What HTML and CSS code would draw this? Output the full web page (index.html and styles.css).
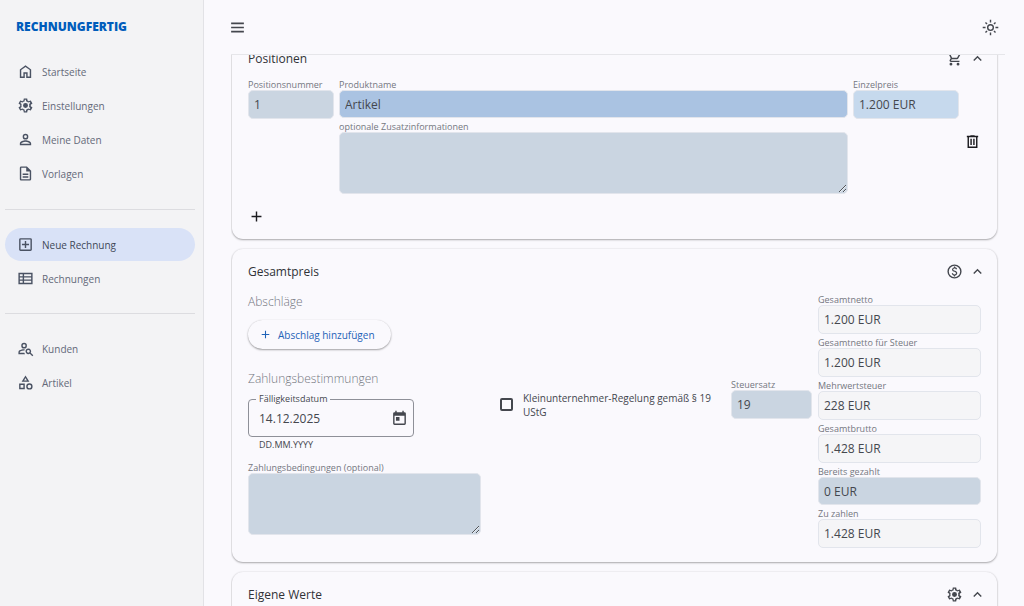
FILE: index.html
```html
<!DOCTYPE html>
<html lang="de">
<head>
  <meta charset="UTF-8">
  <meta name="viewport" content="width=device-width, initial-scale=1">
  <title>Rechnungfertig</title>
  <link rel="stylesheet" href="styles.css">
</head>
<body>

  <!-- Icon sprite -->
  <svg class="sprite" aria-hidden="true">
    <symbol id="i-home" viewBox="0 0 24 24"><path d="M6 19h3v-6h6v6h3v-9l-6-4.5L6 10v9zm-2 2V9l8-6 8 6v12h-7v-6h-2v6H4z"/></symbol>
    <symbol id="i-gear" viewBox="0 0 24 24"><path d="M19.43 12.98c.04-.32.07-.64.07-.98s-.03-.66-.07-.98l2.11-1.65c.19-.15.24-.42.12-.64l-2-3.46c-.12-.22-.39-.3-.61-.22l-2.49 1c-.52-.4-1.08-.73-1.69-.98l-.38-2.65C14.46 2.18 14.25 2 14 2h-4c-.25 0-.46.18-.49.42l-.38 2.65c-.61.25-1.17.59-1.69.98l-2.49-1c-.23-.09-.49 0-.61.22l-2 3.46c-.13.22-.07.49.12.64l2.11 1.65c-.04.32-.07.65-.07.98s.03.66.07.98l-2.11 1.65c-.19.15-.24.42-.12.64l2 3.46c.12.22.39.3.61.22l2.49-1c.52.4 1.08.73 1.69.98l.38 2.65c.03.24.24.42.49.42h4c.25 0 .46-.18.49-.42l.38-2.65c.61-.25 1.17-.59 1.69-.98l2.49 1c.23.09.49 0 .61-.22l2-3.46c.12-.22.07-.49-.12-.64l-2.11-1.65zM17.3 12c0 .5 0 .8-.1 1.3l-.1.9 1.7 1.3-.8 1.4-2-.8-.8.6c-.5.4-1 .6-1.5.8l-.8.3-.3 2.2h-1.6l-.3-2.2-.8-.3c-.5-.2-1-.5-1.5-.8l-.7-.6-2.1.8-.8-1.4 1.7-1.3-.1-.9c0-.5-.1-.9-.1-1.3s0-.8.1-1.3l.1-.9-1.7-1.3.8-1.4 2 .8.8-.6c.5-.4 1-.6 1.5-.8l.8-.3.3-2.2h1.6l.3 2.2.8.3c.5.2 1 .5 1.5.8l.7.6 2.1-.8.8 1.4-1.7 1.3.1.9c.1.5.1.8.1 1.3z"/><circle cx="12" cy="12" r="3.500"/></symbol>
    <symbol id="i-person" viewBox="0 0 24 24"><path d="M12 12a4 4 0 1 0 0-8 4 4 0 0 0 0 8zm0-2a2 2 0 1 1 0-4 2 2 0 0 1 0 4zm0 3c-2.700 0-8 1.300-8 4.500V20h16v-2.500c0-3.200-5.300-4.500-8-4.500zm-6 5v-.5c0-.9 3-2.500 6-2.500s6 1.600 6 2.500v.5H6z"/></symbol>
    <symbol id="i-doc" viewBox="0 0 24 24"><path d="M8 16h8v2H8v-2zm0-4h8v2H8v-2zm6-10H6a2 2 0 0 0-2 2v16c0 1.100.9 2 2 2h12a2 2 0 0 0 2-2V8l-6-6zm4 18H6V4h7v5h5v11z"/></symbol>
    <symbol id="i-addbox" viewBox="0 0 24 24"><path d="M19 3H5a2 2 0 0 0-2 2v14c0 1.100.9 2 2 2h14a2 2 0 0 0 2-2V5a2 2 0 0 0-2-2zm0 16H5V5h14v14zm-8-2h2v-4h4v-2h-4V7h-2v4H7v2h4v4z"/></symbol>
    <symbol id="i-list" viewBox="0 0 24 24"><path d="M2 4v16h20V4H2zm6 2v2.700H4V6h4zM4 10.700h4v2.600H4v-2.600zm0 4.600h4V18H4v-2.700zM20 18H10v-2.700h10V18zm0-4.700H10v-2.600h10v2.600zm0-4.600H10V6h10v2.700z"/></symbol>
    <symbol id="i-usersearch" viewBox="0 0 24 24"><path d="M10 12a4 4 0 1 0 0-8 4 4 0 0 0 0 8zm0-2a2 2 0 1 1 0-4 2 2 0 0 1 0 4zm.4 8H4v-.8c0-.3.2-.7.5-.9A11 11 0 0 1 10 15h.2c.2-.7.5-1.400.9-2-3-.2-5.500.5-7.600 1.600-1 .5-1.500 1.500-1.500 2.600V20h9.300c-.4-.6-.7-1.300-.9-2z"/><path d="M16 12a4 4 0 1 0 2.100 7.400L21.600 23l1.400-1.400-3.600-3.500A4 4 0 0 0 16 12zm0 6a2 2 0 1 1 0-4 2 2 0 0 1 0 4z"/></symbol>
    <symbol id="i-category" viewBox="0 0 24 24"><path d="M12 2 6.500 11h11L12 2zm0 3.800L13.900 9h-3.900L12 5.800zM17.500 13a4.500 4.500 0 1 0 0 9 4.500 4.500 0 0 0 0-9zm0 7a2.500 2.500 0 1 1 0-5 2.500 2.500 0 0 1 0 5zM3 21.500h8v-8H3v8zm2-6h4v4H5v-4z"/></symbol>
    <symbol id="i-menu" viewBox="0 0 24 24"><path d="M3 5h18v2.400H3zM3 10.800h18v2.400H3zM3 16.600h18V19H3z"/></symbol>
    <symbol id="i-sun" viewBox="0 0 24 24"><path d="M12 7a5 5 0 1 0 0 10 5 5 0 0 0 0-10zm0 8a3 3 0 1 1 0-6 3 3 0 0 1 0 6zM11 1h2v4h-2zM11 19h2v4h-2zM1 11h4v2H1zM19 11h4v2h-4zM4.200 5.600l1.400-1.400 2.200 2.200-1.400 1.400zM16.200 17.600l1.400-1.400 2.200 2.200-1.400 1.400zM16.200 6.400l2.200-2.200 1.400 1.400-2.200 2.200zM4.200 18.400l2.200-2.200 1.400 1.400-2.200 2.200z"/></symbol>
    <symbol id="i-cart" viewBox="0 0 24 24"><path d="M15.600 13c.7 0 1.400-.4 1.700-1l3.600-6.500A1 1 0 0 0 20 4H5.200l-.9-2H1v2h2l3.600 7.600L5.200 14c-.7 1.300.2 3 1.800 3h12v-2H7l1.100-2h7.500zM6.200 6h12.100l-2.700 5h-7L6.200 6zM7 18a2 2 0 1 0 0 4 2 2 0 0 0 0-4zm10 0a2 2 0 1 0 0 4 2 2 0 0 0 0-4z"/></symbol>
    <symbol id="i-up" viewBox="0 0 24 24"><path d="m12 8-6 6 1.400 1.400 4.600-4.600 4.600 4.600L18 14z"/></symbol>
    <symbol id="i-trash" viewBox="0 0 24 24"><path d="M15 4V3H9v1H4v2h1v15h14V6h1V4h-5zm2 15H7V6h10v13zM9 8h2v9H9zM13 8h2v9h-2z"/></symbol>
    <symbol id="i-plus" viewBox="0 0 24 24"><path d="M19 13h-6v6h-2v-6H5v-2h6V5h2v6h6z"/></symbol>
    <symbol id="i-coin" viewBox="0 0 24 24"><path d="M12 2a10 10 0 1 0 0 20 10 10 0 0 0 0-20zm0 18a8 8 0 1 1 0-16 8 8 0 0 1 0 16zm.9-8.900c-1.800-.6-2.700-.9-2.700-1.900s1.200-1.500 1.900-1.500c1.400 0 1.900 1 2 1.400l1.600-.7c-.2-.4-.8-1.900-2.800-2.300V5h-1.700v1.200c-2.600.6-2.700 2.800-2.700 3 0 2.300 2.200 2.900 3.300 3.300 1.600.6 2.300 1.100 2.300 2 0 1.100-1.100 1.600-2 1.600-1.800 0-2.400-1.900-2.400-2.100l-1.600.7c.6 2.200 2.300 2.800 3 3V19h1.700v-1.200c.5-.1 3.100-.6 3.100-3.200 0-1.300-.6-2.500-3-3.500z"/></symbol>
    <symbol id="i-date" viewBox="0 0 24 24"><path d="M19 3h-1V1h-2v2H8V1H6v2H5a2 2 0 0 0-2 2v14c0 1.100.9 2 2 2h14a2 2 0 0 0 2-2V5a2 2 0 0 0-2-2zm0 16H5V8h14v11zM7 10h5v5H7z"/></symbol>
  </svg>

  <div class="app">
    <aside class="sidebar">
      <div class="brand">RECHNUNGFERTIG</div>
      <nav>
        <div class="nav-group">
          <a class="nav-item" href="#"><svg class="icon"><use href="#i-home"/></svg>Startseite</a>
          <a class="nav-item" href="#"><svg class="icon"><use href="#i-gear"/></svg>Einstellungen</a>
          <a class="nav-item" href="#"><svg class="icon"><use href="#i-person"/></svg>Meine Daten</a>
          <a class="nav-item" href="#"><svg class="icon"><use href="#i-doc"/></svg>Vorlagen</a>
        </div>
        <div class="nav-group">
          <a class="nav-item active" href="#"><svg class="icon"><use href="#i-addbox"/></svg>Neue Rechnung</a>
          <a class="nav-item" href="#"><svg class="icon"><use href="#i-list"/></svg>Rechnungen</a>
        </div>
        <div class="nav-group">
          <a class="nav-item" href="#"><svg class="icon"><use href="#i-usersearch"/></svg>Kunden</a>
          <a class="nav-item" href="#"><svg class="icon"><use href="#i-category"/></svg>Artikel</a>
        </div>
      </nav>
    </aside>

    <main class="main">
      <header class="topbar">
        <button class="icon-btn" type="button" aria-label="Menü"><svg class="icon"><use href="#i-menu"/></svg></button>
        <button class="icon-btn" type="button" aria-label="Design"><svg class="icon"><use href="#i-sun"/></svg></button>
      </header>

      <form class="scroller">
        <section class="card">
          <div class="card-head">
            <h2>Positionen</h2>
            <svg class="icon"><use href="#i-cart"/></svg>
            <button class="icon-btn" type="button" aria-label="Positionen einklappen"><svg class="icon"><use href="#i-up"/></svg></button>
          </div>
          <div class="position">
            <div class="field pos-number">
              <label for="nr">Positionsnummer</label>
              <input class="filled" id="nr" type="text" value="1">
            </div>
            <div class="pos-product">
              <div class="field">
                <label for="product">Produktname</label>
                <input class="filled product" id="product" type="text" value="Artikel">
              </div>
              <div class="field">
                <label for="info">optionale Zusatzinformationen</label>
                <textarea class="filled" id="info"></textarea>
              </div>
            </div>
            <div class="field pos-price">
              <label for="price">Einzelpreis</label>
              <input class="filled price" id="price" type="text" value="1.200 EUR">
            </div>
            <button class="icon-btn dark" type="button" aria-label="Position löschen"><svg class="icon"><use href="#i-trash"/></svg></button>
          </div>
          <button class="icon-btn dark add-position" type="button" aria-label="Position hinzufügen"><svg class="icon"><use href="#i-plus"/></svg></button>
        </section>

        <section class="card">
          <div class="card-head">
            <h2>Gesamtpreis</h2>
            <svg class="icon"><use href="#i-coin"/></svg>
            <button class="icon-btn" type="button" aria-label="Gesamtpreis einklappen"><svg class="icon"><use href="#i-up"/></svg></button>
          </div>
          <div class="total">
            <div class="total-left">
              <h3>Abschläge</h3>
              <button class="pill" type="button"><svg class="icon small"><use href="#i-plus"/></svg>Abschlag hinzufügen</button>
              <div class="terms">
                <div class="terms-date">
                  <h3>Zahlungsbestimmungen</h3>
                  <fieldset class="outlined">
                    <legend><label for="due">Fälligkeitsdatum</label></legend>
                    <input id="due" type="text" value="14.12.2025">
                    <button class="icon-btn" type="button" aria-label="Kalender öffnen"><svg class="icon"><use href="#i-date"/></svg></button>
                  </fieldset>
                  <p class="hint">DD.MM.YYYY</p>
                  <div class="field">
                    <label for="terms">Zahlungsbedingungen (optional)</label>
                    <textarea class="filled" id="terms"></textarea>
                  </div>
                </div>
                <label class="check"><input type="checkbox"><span>Kleinunternehmer-Regelung gemäß § 19 UStG</span></label>
                <div class="field tax">
                  <label for="tax">Steuersatz</label>
                  <input class="filled" id="tax" type="text" value="19">
                </div>
              </div>
            </div>
            <div class="sums">
              <div class="field">
                <label for="net">Gesamtnetto</label>
                <input id="net" type="text" value="1.200 EUR" readonly>
              </div>
              <div class="field">
                <label for="nettax">Gesamtnetto für Steuer</label>
                <input id="nettax" type="text" value="1.200 EUR" readonly>
              </div>
              <div class="field">
                <label for="vat">Mehrwertsteuer</label>
                <input id="vat" type="text" value="228 EUR" readonly>
              </div>
              <div class="field">
                <label for="gross">Gesamtbrutto</label>
                <input id="gross" type="text" value="1.428 EUR" readonly>
              </div>
              <div class="field">
                <label for="paid">Bereits gezahlt</label>
                <input class="filled paid" id="paid" type="text" value="0 EUR">
              </div>
              <div class="field">
                <label for="open">Zu zahlen</label>
                <input id="open" type="text" value="1.428 EUR" readonly>
              </div>
            </div>
          </div>
        </section>

        <section class="card">
          <div class="card-head">
            <h2>Eigene Werte</h2>
            <svg class="icon"><use href="#i-gear"/></svg>
            <button class="icon-btn" type="button" aria-label="Eigene Werte einklappen"><svg class="icon"><use href="#i-up"/></svg></button>
          </div>
        </section>
      </form>
    </main>
  </div>

</body>
</html>
```
FILE: styles.css
```css
* {
  box-sizing: border-box;
}

body {
  margin: 0;
  background: #faf9fd;
  color: #44474e;
  font-family: "Open Sans", "Noto Sans", sans-serif;
  font-size: 12px;
  line-height: 16px;
}

h2, h3, p {
  margin: 0;
}

button, input, textarea {
  font: inherit;
  color: inherit;
}

.sprite {
  display: none;
}

.icon {
  width: 17px;
  height: 17px;
  flex: none;
  display: block;
  fill: currentColor;
}

.icon.small {
  width: 13px;
  height: 13px;
}

.icon-btn {
  padding: 0;
  border: none;
  background: none;
  cursor: pointer;
}

.icon-btn.dark {
  color: #1b1b1f;
}

.app {
  display: flex;
  height: 100vh;
}

/* Sidebar */
.sidebar {
  width: 204px;
  flex: none;
  background: #f3f3f5;
  border-right: 1px solid #e2e2e6;
}

.brand {
  padding: 19px 16px 11px;
  color: #005cbb;
  font-weight: 800;
}

.nav-group {
  display: flex;
  flex-direction: column;
  gap: 1px;
  margin: 0 8px 0 5px;
  padding: 18px 0;
  border-bottom: 1px solid #dcdce0;
}

.nav-group:first-child {
  padding: 9px 0 19px;
}

.nav-group:last-child {
  border-bottom: none;
}

.nav-item {
  display: flex;
  align-items: center;
  gap: 8px;
  height: 33px;
  padding: 0 12px;
  border-radius: 17px;
  color: #646979;
  font-size: 10px;
  text-decoration: none;
}

.nav-item .icon {
  color: #4a5263;
}

.nav-item.active {
  background: #d9e2f7;
  color: #414858;
}

/* Main area */
.main {
  flex: 1;
  min-width: 0;
  display: flex;
  flex-direction: column;
  padding: 0 19px 0 27px;
}

.topbar {
  display: flex;
  align-items: center;
  justify-content: space-between;
  height: 55px;
  flex: none;
  padding-right: 6px;
  border-bottom: 1px solid #e6e6ea;
}

.topbar .icon-btn:first-child {
  margin-left: -2px;
}

.scroller {
  flex: 1;
  min-height: 0;
  overflow: hidden;
  padding: 0 8px 0 1px;
}

.card {
  margin-bottom: 10px;
  padding: 14px 16px;
  border-radius: 11px;
  box-shadow: 0 1px 2px rgba(0, 0, 0, 0.3), 0 0 2px rgba(0, 0, 0, 0.12);
}

/* The list is scrolled a little under the top bar */
.card:first-child {
  margin-top: -19px;
}

.card-head {
  display: flex;
  align-items: center;
  gap: 6px;
}

.card-head h2 {
  flex: 1;
  font-size: 12px;
  font-weight: 400;
  color: #303237;
}

.card-head .icon-btn {
  margin-right: -5px;
}

/* Fields */
.field {
  display: flex;
  flex-direction: column;
}

.field label {
  color: #74777f;
  font-size: 9px;
  line-height: 11px;
}

.field input,
.field textarea {
  width: 100%;
  border: 1px solid #e2e5ec;
  border-radius: 5px;
  outline: none;
}

.field input {
  height: 29px;
  padding: 0 5px;
  background: #f5f5f7;
}

.field textarea {
  height: 62px;
  resize: vertical;
}

.field .filled {
  background: #cad5e1;
}

.field .product {
  height: 28px;
  background: #aac3e2;
}

.field .price {
  background: #c6d9ed;
}

.field .paid {
  height: 28px;
}

/* Position row */
.position {
  display: flex;
  gap: 5px;
  margin-top: 12px;
}

.pos-number {
  width: 86px;
}

.pos-product {
  flex: 1;
  display: flex;
  flex-direction: column;
  gap: 3px;
}

.pos-price {
  width: 106px;
}

.position .icon-btn {
  padding-top: 9px;
}

.add-position {
  margin-top: 14px;
  display: block;
}

/* Totals */
.total {
  display: flex;
  gap: 6px;
  margin-top: 14px;
}

.total-left {
  flex: 1;
}

.total h3 {
  color: #74777f;
  font-size: 12px;
  font-weight: 300;
}

.pill {
  display: flex;
  align-items: center;
  gap: 6px;
  height: 29px;
  margin-top: 10px;
  padding: 0 16px 0 11px;
  border: none;
  border-radius: 15px;
  background: #faf9fd;
  box-shadow: 0 1px 2px rgba(0, 0, 0, 0.35), 0 0 1px rgba(0, 0, 0, 0.12);
  color: #1f63b8;
  font-size: 10px;
}

.terms {
  display: flex;
  margin-top: 22px;
}

.terms-date {
  width: 233px;
}

.outlined {
  display: flex;
  align-items: center;
  width: 166px;
  min-width: 0;
  height: 43px;
  margin: 7px 0 0;
  padding: 0 5px 3px 10px;
  border: 1px solid #8e9098;
  border-radius: 4px;
}

.outlined legend {
  padding: 0 3px;
  margin-left: -3px;
  font-size: 9px;
  line-height: 10px;
}

.outlined input {
  flex: 1;
  width: 0;
  min-width: 0;
  padding: 0;
  border: none;
  background: none;
  outline: none;
}

.hint {
  padding: 2px 11px 0;
  font-size: 9px;
  line-height: 12px;
}

.terms-date .field {
  margin-top: 11px;
}

.check {
  display: flex;
  align-items: flex-start;
  flex: 1;
  gap: 10px;
  margin: 20px 6px 0 19px;
  font-size: 10px;
  line-height: 14px;
}

.check input {
  appearance: none;
  flex: none;
  width: 13px;
  height: 13px;
  margin: 7px 0 0;
  border: 2px solid #44474e;
  border-radius: 2px;
}

.tax {
  width: 81px;
  margin-top: 8px;
}

.sums {
  display: flex;
  flex-direction: column;
  gap: 3px;
  width: 163px;
}
```
